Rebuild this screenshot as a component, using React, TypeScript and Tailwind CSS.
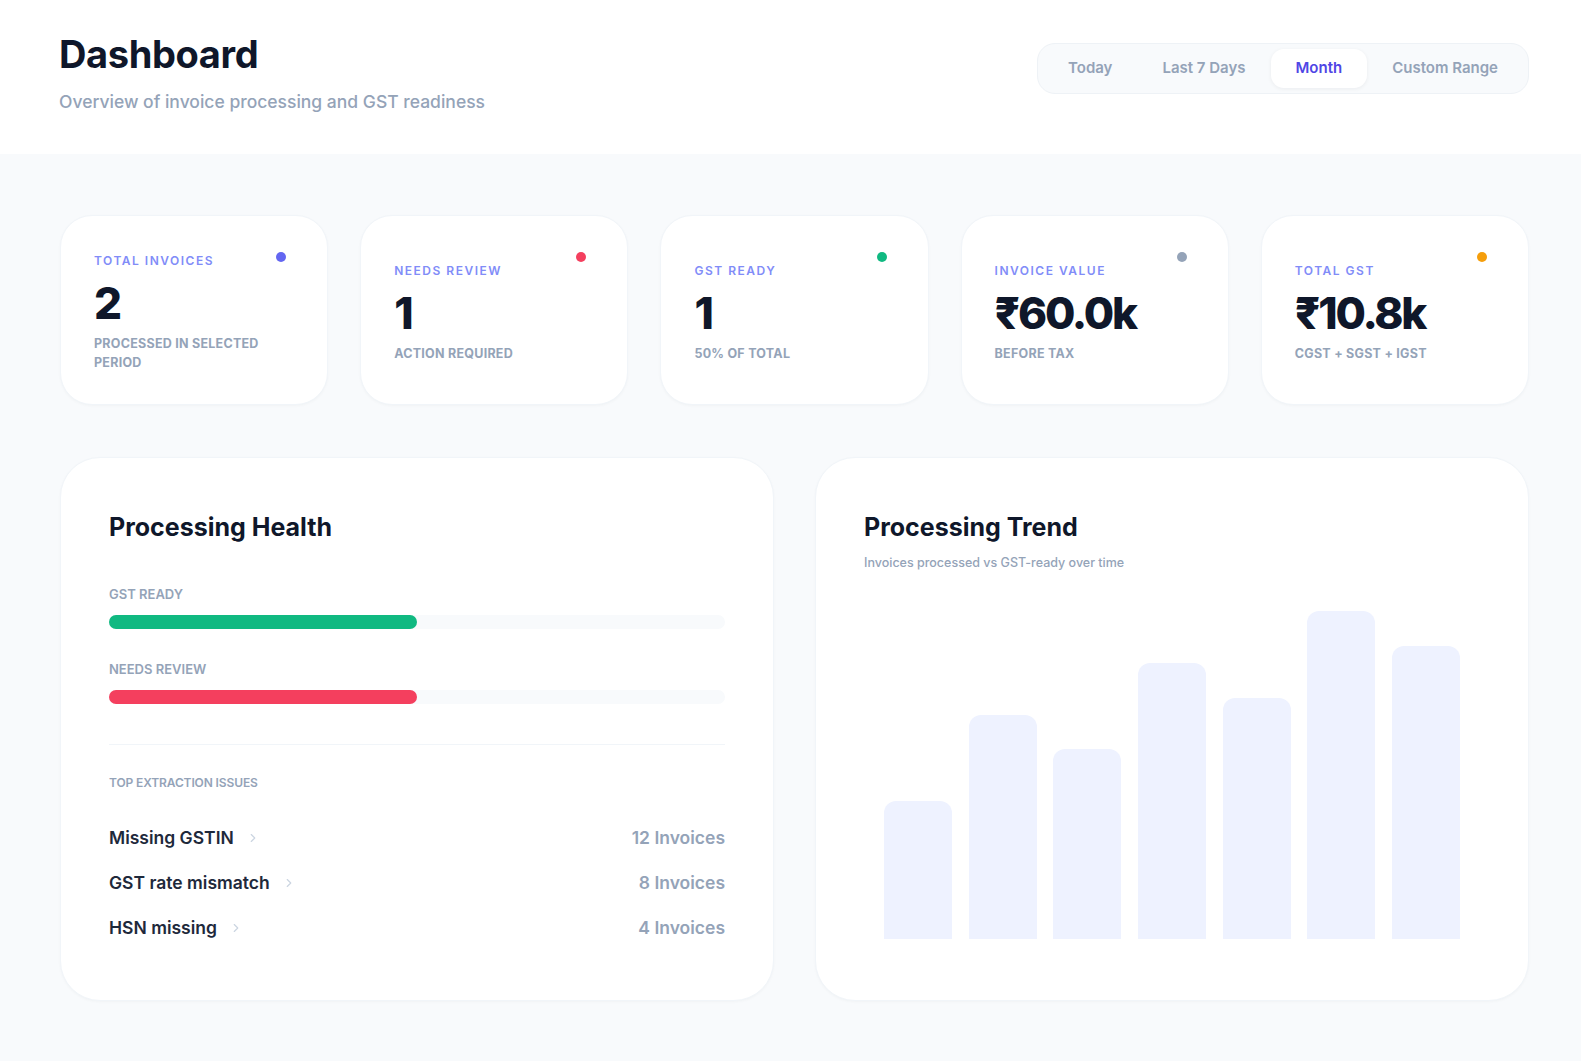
import React from "react";
import { ChevronRight } from "lucide-react";

const tabs = ["Today", "Last 7 Days", "Month", "Custom Range"];

const stats = [
  { label: "TOTAL INVOICES", value: "2", sub: "PROCESSED IN SELECTED PERIOD", dot: "bg-[#6366f1]" },
  { label: "NEEDS REVIEW", value: "1", sub: "ACTION REQUIRED", dot: "bg-[#f43f5e]" },
  { label: "GST READY", value: "1", sub: "50% OF TOTAL", dot: "bg-[#10b981]" },
  { label: "INVOICE VALUE", value: "₹60.0k", sub: "BEFORE TAX", dot: "bg-[#94a3b8]" },
  { label: "TOTAL GST", value: "₹10.8k", sub: "CGST + SGST + IGST", dot: "bg-[#f59e0b]" },
];

const issues = [
  { name: "Missing GSTIN", count: "12 Invoices" },
  { name: "GST rate mismatch", count: "8 Invoices" },
  { name: "HSN missing", count: "4 Invoices" },
];

const bars = [40, 65, 55, 80, 70, 95, 85];

export default function App() {
  return (
    <div className="min-h-screen bg-[#f8fafc] font-['Inter','Noto_Sans',sans-serif] antialiased">
      <header className="bg-white pl-[59px] pr-[52px] pt-[33px] pb-[39px] flex justify-between items-start">
        <div>
          <h1 className="text-[38px] leading-[42px] font-bold text-[#0f172a] tracking-[-0.01em]">Dashboard</h1>
          <p className="mt-[14px] text-[17.5px] leading-[26px] font-medium text-[#94a3b8]">
            Overview of invoice processing and GST readiness
          </p>
        </div>
        <div className="mt-[10px] flex items-center rounded-[18px] border border-[#eef2f6] bg-[#f8fafc] p-[5px]">
          {tabs.map((t) => (
            <button
              key={t}
              className={
                t === "Month"
                  ? "h-[39px] px-[25px] rounded-[13px] bg-white text-[15px] font-semibold text-[#4f46e5] shadow-[0_1px_4px_rgba(15,23,42,0.06)]"
                  : "h-[39px] px-[25px] rounded-[13px] text-[15px] font-semibold text-[#94a3b8]"
              }
            >
              {t}
            </button>
          ))}
        </div>
      </header>

      <main className="pl-[60px] pr-[52px] pt-[61px] pb-[60px]">
        <div className="grid grid-cols-5 gap-8">
          {stats.map((s) => (
            <div
              key={s.label}
              className="relative flex min-h-[190px] flex-col justify-center rounded-[32px] border border-[#f1f5f9] bg-white px-[33px] pt-[37px] pb-[32px] shadow-[0_1px_3px_rgba(15,23,42,0.03)]"
            >
              <span className={`absolute right-[41px] top-[36px] h-[10px] w-[10px] rounded-full ${s.dot}`} />
              <div className="text-[12px] leading-[16px] font-semibold tracking-[0.125em] text-[#818cf8]">{s.label}</div>
              <div className="mt-[10px] text-[44px] leading-[48px] font-extrabold tracking-[-0.05em] text-[#0f172a]">
                {s.value}
              </div>
              <div className="mt-[7px] pr-4 text-[12.5px] leading-[19px] font-bold tracking-[0.02em] text-[#94a3b8]">
                {s.sub}
              </div>
            </div>
          ))}
        </div>

        <div className="mt-[52px] grid grid-cols-2 gap-[41px]">
          <section className="rounded-[40px] border border-[#f1f5f9] bg-white px-12 pt-[53px] pb-[58px] shadow-[0_1px_3px_rgba(15,23,42,0.03)]">
            <h2 className="text-[25px] leading-[32px] font-bold text-[#0f172a]">Processing Health</h2>

            <div className="mt-[41px]">
              <div className="text-[13px] leading-[20px] font-semibold text-[#94a3b8]">GST READY</div>
              <div className="mt-[11px] h-[14px] w-full rounded-full bg-[#f8fafc]">
                <div className="h-full w-1/2 rounded-full bg-[#10b981]" />
              </div>
            </div>

            <div className="mt-[30px]">
              <div className="text-[13px] leading-[20px] font-semibold text-[#94a3b8]">NEEDS REVIEW</div>
              <div className="mt-[11px] h-[14px] w-full rounded-full bg-[#f8fafc]">
                <div className="h-full w-1/2 rounded-full bg-[#f43f5e]" />
              </div>
            </div>

            <div className="mt-[40px] border-t border-[#f1f5f9] pt-[30px]">
              <div className="text-[12px] leading-[16px] font-semibold tracking-[-0.01em] text-[#94a3b8]">
                TOP EXTRACTION ISSUES
              </div>
              <ul className="mt-[33px] flex flex-col gap-[17px]">
                {issues.map((i) => (
                  <li key={i.name} className="flex items-center justify-between">
                    <div className="flex items-center gap-3">
                      <span className="text-[17.5px] leading-[28px] font-semibold text-[#1e293b]">{i.name}</span>
                      <ChevronRight size={14} strokeWidth={2} className="text-[#cbd5e1]" />
                    </div>
                    <span className="text-[17.5px] leading-[28px] font-semibold text-[#94a3b8]">{i.count}</span>
                  </li>
                ))}
              </ul>
            </div>
          </section>

          <section className="rounded-[40px] border border-[#f1f5f9] bg-white px-12 pt-[53px] pb-12 shadow-[0_1px_3px_rgba(15,23,42,0.03)]">
            <h2 className="text-[25px] leading-[32px] font-bold text-[#0f172a]">Processing Trend</h2>
            <p className="mt-[10px] text-[12.5px] leading-[20px] font-medium text-[#94a3b8]">
              Invoices processed vs GST-ready over time
            </p>
            <div className="mt-[21px] flex h-[345px] items-end justify-between px-5">
              {bars.map((b, idx) => (
                <div
                  key={idx}
                  className="w-[68px] rounded-t-[12px] bg-[#eef2ff]"
                  style={{ height: `${b}%` }}
                />
              ))}
            </div>
          </section>
        </div>
      </main>
    </div>
  );
}
